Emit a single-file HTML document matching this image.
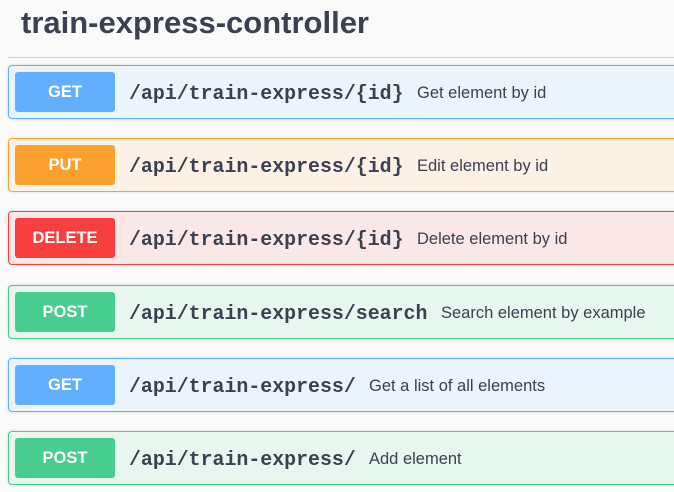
<!DOCTYPE html>
<html><head><meta charset="utf-8"><style>
body{margin:0;width:674px;height:492px;background:#fafafa;overflow:hidden;position:relative;font-family:"Liberation Sans",sans-serif;color:#3b4151}
h1{position:absolute;left:21px;top:5px;margin:0;font-size:31px;font-weight:bold;letter-spacing:0px;color:#3b4151}
.hr{position:absolute;left:8px;right:0;top:57px;height:1px;background:#cfcfcf}
.row{position:absolute;left:8px;width:680px;height:52px;border:1px solid;border-radius:4px;box-sizing:content-box;box-shadow:0 0 3px rgba(0,0,0,.15)}
.b{position:absolute;left:6px;top:6px;width:100px;height:40px;border-radius:3px;color:#fff;font-weight:bold;font-size:16.5px;line-height:41px;text-align:center}
.p{position:absolute;left:120px;top:2px;line-height:52px;font-family:"Liberation Mono",monospace;font-weight:bold;font-size:19.9px;color:#3b4151}
.d{position:absolute;top:1px;line-height:52px;font-size:16.5px;color:#3b4151}
.get{background:#ebf3fb;border-color:#61affe}.get .b{background:#61affe}
.put{background:#fbf1e6;border-color:#fca130}.put .b{background:#fca130}
.del{background:#fae7e7;border-color:#f93e3e}.del .b{background:#f93e3e}
.post{background:#e8f6f0;border-color:#49cc90}.post .b{background:#49cc90}
</style></head><body>
<h1>train-express-controller</h1>
<div class="hr"></div>
<div class="row get" style="top:65px"><div class="b">GET</div><div class="p">/api/train-express/{id}</div><div class="d" style="left:408px">Get element by id</div></div>
<div class="row put" style="top:138px"><div class="b">PUT</div><div class="p">/api/train-express/{id}</div><div class="d" style="left:408px">Edit element by id</div></div>
<div class="row del" style="top:211px"><div class="b">DELETE</div><div class="p">/api/train-express/{id}</div><div class="d" style="left:408px">Delete element by id</div></div>
<div class="row post" style="top:285px"><div class="b">POST</div><div class="p">/api/train-express/search</div><div class="d" style="left:432px">Search element by example</div></div>
<div class="row get" style="top:358px"><div class="b">GET</div><div class="p">/api/train-express/</div><div class="d" style="left:360px">Get a list of all elements</div></div>
<div class="row post" style="top:431px"><div class="b">POST</div><div class="p">/api/train-express/</div><div class="d" style="left:360px">Add element</div></div>
</body></html>
